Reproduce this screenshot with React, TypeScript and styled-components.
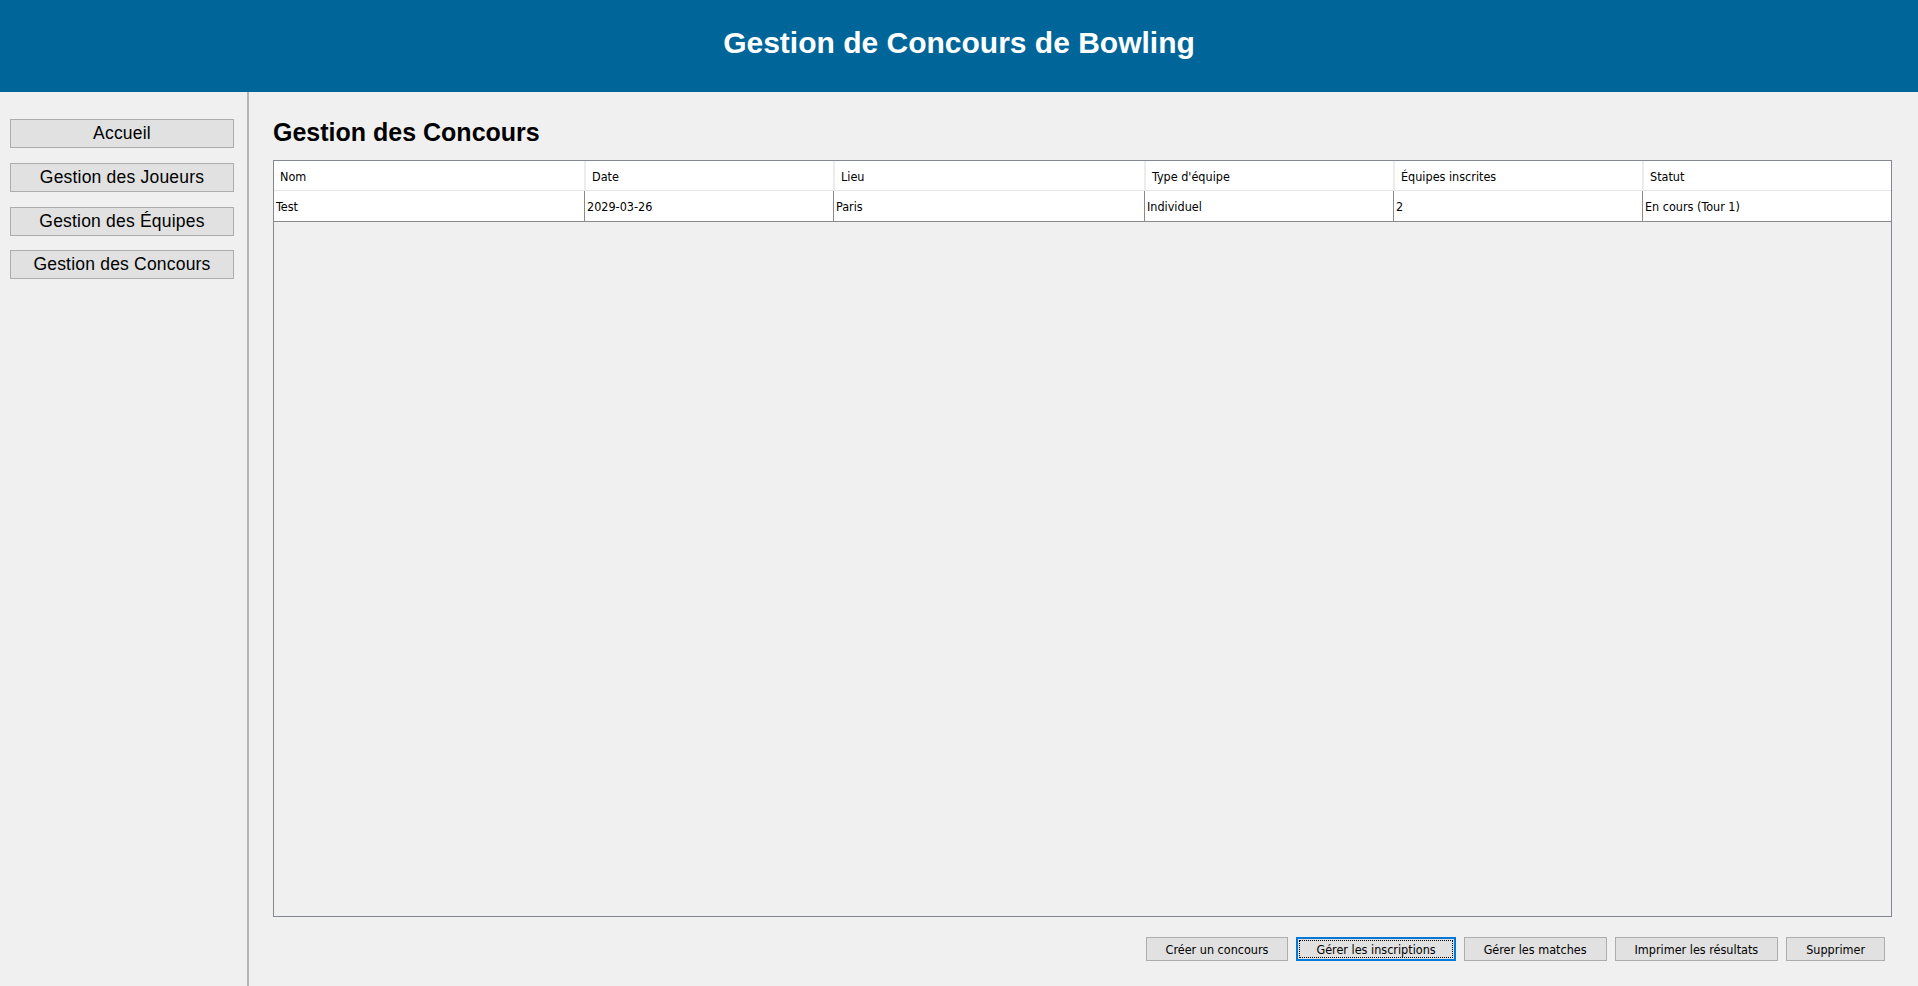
import React from 'react'
import styled, { createGlobalStyle } from 'styled-components'

const GlobalStyle = createGlobalStyle`
    html, body {
        margin: 0;
        padding: 0;
        background: #f0f0f0;
        overflow: hidden;
    }
    #root {
        height: 100vh;
    }
`

const AppFrame = styled.div`
    display: flex;
    flex-direction: column;
    height: 100%;
    background: #f0f0f0;
    font-family: "Liberation Sans", Arial, sans-serif;
`

const TopBar = styled.header`
    height: 92px;
    flex-shrink: 0;
    box-sizing: border-box;
    padding-top: 26px;
    background: #006699;
    display: flex;
    justify-content: center;
    align-items: flex-start;
`

const AppTitle = styled.h1`
    margin: 0;
    color: #ffffff;
    font-size: 30px;
    font-weight: bold;
    line-height: 34px;
`

const Body = styled.div`
    flex: 1;
    display: flex;
    min-height: 0;
`

const Sidebar = styled.nav`
    width: 249px;
    flex-shrink: 0;
    box-sizing: border-box;
    padding: 27px 13px 0 10px;
    border-right: 2px solid #b4b4b4;
    display: flex;
    flex-direction: column;
    gap: 14.75px;
`

const NavButton = styled.button`
    height: 29px;
    width: 100%;
    background: #e1e1e1;
    border: 1px solid #adadad;
    font-family: "Liberation Sans", Arial, sans-serif;
    font-size: 17.5px;
    letter-spacing: 0.2px;
    color: #000;
    padding: 0;
    cursor: pointer;
`

const Main = styled.main`
    flex: 1;
    min-width: 0;
    min-height: 0;
    display: flex;
    flex-direction: column;
    padding: 26px 26px 25px 24px;
`

const SectionTitle = styled.h2`
    margin: 0 0 13px 0;
    font-size: 25px;
    line-height: 29px;
    font-weight: bold;
    color: #000;
`

const TableFrame = styled.div`
    flex: 1;
    border: 1px solid #828790;
    background: #f0f0f0;
    display: flex;
    flex-direction: column;
    min-height: 0;
`

const Row = styled.div<{ $header?: boolean }>`
    display: grid;
    grid-template-columns: 310px 249px 311px 249px 249px 1fr;
    background: #ffffff;
    height: ${p => (p.$header ? '29px' : '30px')};
    border-bottom: 1px solid ${p => (p.$header ? '#e6e6e6' : '#8a8a8a')};
    font-family: "DejaVu Sans Condensed", "DejaVu Sans", sans-serif;
    font-stretch: condensed;
    font-size: 12.5px;
    color: #000;
`

const HeadCell = styled.div`
    display: flex;
    align-items: center;
    padding-left: 6px;
    padding-top: 2px;
    &:not(:first-child) {
        border-left: 2px solid #ececec;
    }
`

const Cell = styled.div`
    display: flex;
    align-items: center;
    padding-left: 2px;
    padding-top: 1px;
    &:not(:first-child) {
        border-left: 1px solid #8a8a8a;
    }
`

const ActionBar = styled.div`
    margin-top: 20px;
    display: flex;
    justify-content: flex-end;
    gap: 8px;
    padding-right: 7px;
`

const ActionButton = styled.button<{ $focused?: boolean }>`
    position: relative;
    height: 24px;
    padding: 0 19px;
    background: #e1e1e1;
    border: 1px solid ${p => (p.$focused ? '#0078d7' : '#adadad')};
    box-shadow: ${p => (p.$focused ? 'inset 0 0 0 1px #0078d7' : 'none')};
    font-family: "DejaVu Sans Condensed", "DejaVu Sans", sans-serif;
    font-stretch: condensed;
    font-size: 12.5px;
    color: #000;
    cursor: pointer;
    &::after {
        content: "";
        display: ${p => (p.$focused ? 'block' : 'none')};
        position: absolute;
        inset: 2px;
        border: 1px dotted #000;
    }
`

const columns = ['Nom', 'Date', 'Lieu', "Type d'équipe", 'Équipes inscrites', 'Statut']

interface Concours {
    nom: string
    date: string
    lieu: string
    type: string
    equipes: number
    statut: string
}

const concoursList: Concours[] = [
    { nom: 'Test', date: '2029-03-26', lieu: 'Paris', type: 'Individuel', equipes: 2, statut: 'En cours (Tour 1)' },
]

const navItems = ['Accueil', 'Gestion des Joueurs', 'Gestion des Équipes', 'Gestion des Concours']

const actions = ['Créer un concours', 'Gérer les inscriptions', 'Gérer les matches', 'Imprimer les résultats', 'Supprimer']

export default function App() {
    return (
        <>
            <GlobalStyle />
            <AppFrame>
                <TopBar>
                    <AppTitle>Gestion de Concours de Bowling</AppTitle>
                </TopBar>
                <Body>
                    <Sidebar>
                        {navItems.map(item => (
                            <NavButton key={item}>{item}</NavButton>
                        ))}
                    </Sidebar>
                    <Main>
                        <SectionTitle>Gestion des Concours</SectionTitle>
                        <TableFrame>
                            <Row $header>
                                {columns.map(col => (
                                    <HeadCell key={col}>{col}</HeadCell>
                                ))}
                            </Row>
                            {concoursList.map(c => (
                                <Row key={c.nom}>
                                    <Cell>{c.nom}</Cell>
                                    <Cell>{c.date}</Cell>
                                    <Cell>{c.lieu}</Cell>
                                    <Cell>{c.type}</Cell>
                                    <Cell>{c.equipes}</Cell>
                                    <Cell>{c.statut}</Cell>
                                </Row>
                            ))}
                        </TableFrame>
                        <ActionBar>
                            {actions.map(a => (
                                <ActionButton key={a} $focused={a === 'Gérer les inscriptions'}>{a}</ActionButton>
                            ))}
                        </ActionBar>
                    </Main>
                </Body>
            </AppFrame>
        </>
    )
}
